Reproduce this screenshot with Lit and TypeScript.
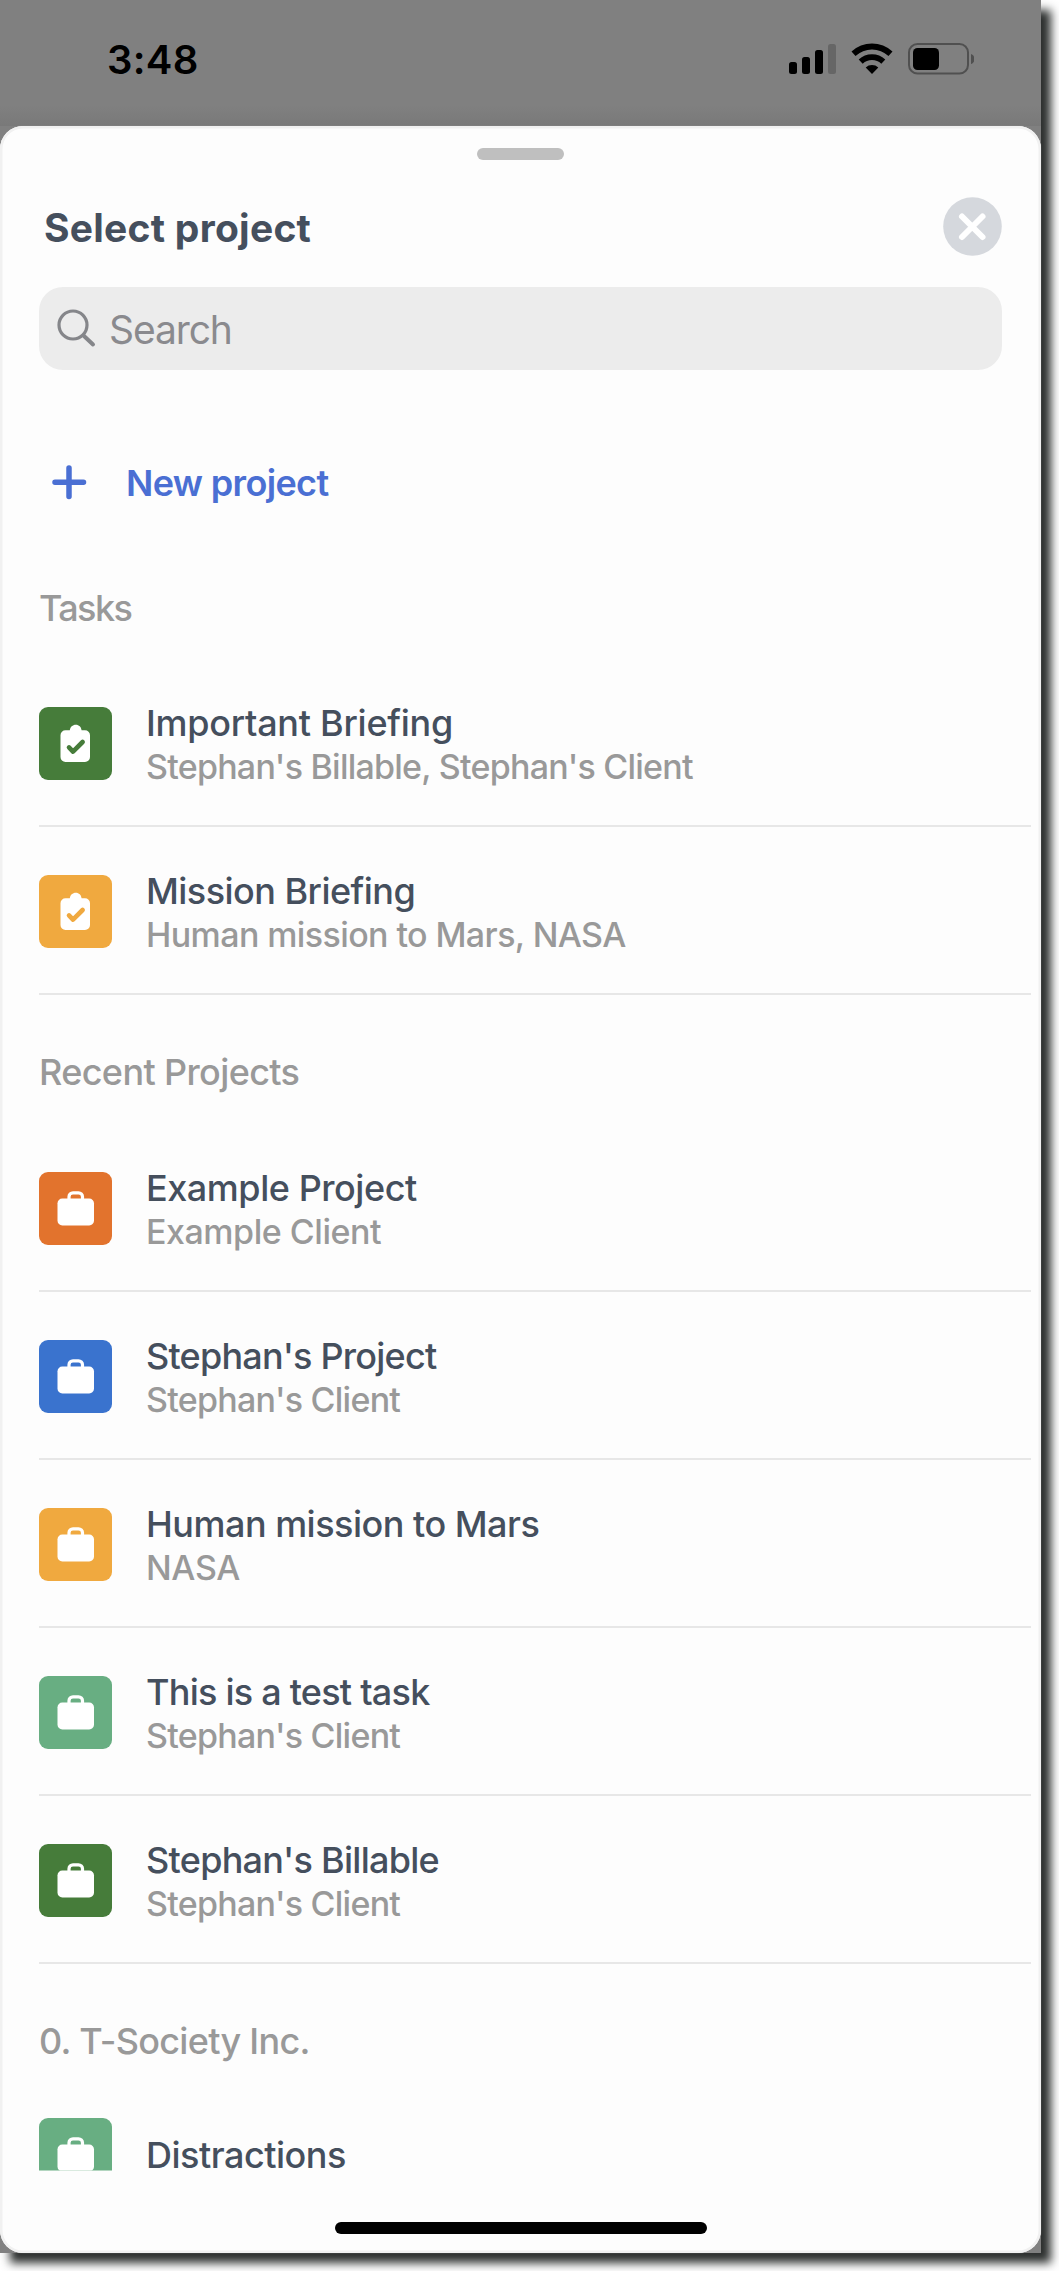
import { LitElement, html, css, svg } from "lit";
import { customElement, property } from "lit/decorators.js";

type Kind = "task" | "project";
/* track / subTrack: letter spacing in px for the title and the subtitle */
interface Entry { kind: Kind; color: string; title: string; track: number; sub?: string; subTrack?: number; }
interface Group { label: string; track: number; rows: Entry[]; }

const groups: Group[] = [
  {
    label: "Tasks", track: -1.6,
    rows: [
      { kind: "task", color: "#467c3a", title: "Important Briefing", track: -0.26, sub: "Stephan's Billable, Stephan's Client", subTrack: -0.76 },
      { kind: "task", color: "#f0a93f", title: "Mission Briefing", track: -0.54, sub: "Human mission to Mars, NASA", subTrack: -0.6 },
    ],
  },
  {
    label: "Recent Projects", track: -0.63,
    rows: [
      { kind: "project", color: "#e2732d", title: "Example Project", track: -0.45, sub: "Example Client", subTrack: -0.46 },
      { kind: "project", color: "#3a73ce", title: "Stephan's Project", track: -0.77, sub: "Stephan's Client", subTrack: -0.75 },
      { kind: "project", color: "#f0a93f", title: "Human mission to Mars", track: -0.5, sub: "NASA", subTrack: -0.36 },
      { kind: "project", color: "#68ae82", title: "This is a test task", track: -0.76, sub: "Stephan's Client", subTrack: -0.75 },
      { kind: "project", color: "#467c3a", title: "Stephan's Billable", track: -0.72, sub: "Stephan's Client", subTrack: -0.75 },
    ],
  },
  { label: "0. T-Society Inc.", track: -0.7, rows: [{ kind: "project", color: "#68ae82", title: "Distractions", track: -0.5 }] },
];

const glyphs = {
  task: svg`<path fill="#fff" d="M26.500 23.300h4.300c.4-3.400 2.800-5.600 6-5.600s5.400 2.200 5.800 5.600H46a5 5 0 0 1 5 5V50a5 5 0 0 1-5 5H26.500a5 5 0 0 1-5-5V28.300a5 5 0 0 1 5-5z"/><path fill="none" stroke="currentColor" stroke-width="4.600" stroke-linecap="round" stroke-linejoin="round" d="M30 40.400l4 4.200L43.600 35"/>`,
  project: svg`<rect x="18.500" y="26.500" width="36.500" height="27" rx="4.800" fill="#fff"/><path fill="none" stroke="#fff" stroke-width="3.200" d="M30 28v-3.200a4 4 0 0 1 4-4h5.500a4 4 0 0 1 4 4V28"/>`,
};

@customElement("entry-row")
export class EntryRow extends LitElement {
  @property({ attribute: false }) entry!: Entry;
  static styles = css`
    :host { display: block; }
    .row { display: flex; gap: 34px; height: 120px; margin-bottom: 48px; box-sizing: border-box; border-bottom: 2px solid #e7e7e7; }
    .row.single { border: 0; margin: 0; height: 73px; }
    .tile { display: block; width: 73px; height: 73px; flex: none; }
    .single .tile { clip-path: inset(0 0 20.500px 0); }
    .text { display: flex; flex-direction: column; white-space: nowrap; }
    .single .text { height: 73px; justify-content: center; }
    .title { font-size: 36px; line-height: 44px; font-weight: 500; color: #454f5d; margin-top: -6px; }
    .single .title { margin-top: 1px; }
    .sub { font-size: 34px; line-height: 44px; font-weight: 500; color: #999; }
  `;
  render() {
    const e = this.entry;
    return html`<div class="row ${e.sub ? "" : "single"}">
      <svg class="tile" viewBox="0 0 73 73" style="color:${e.color}">
        <rect width="73" height="73" rx="9" fill="currentColor"/>${glyphs[e.kind]}
      </svg>
      <div class="text"><span class="title" style="letter-spacing:${e.track}px">${e.title}</span>${e.sub
        ? html`<span class="sub" style="letter-spacing:${e.subTrack}px">${e.sub}</span>` : ""}</div>
    </div>`;
  }
}

@customElement("app-root")
export class AppRoot extends LitElement {
  static styles = css`
    :host { display: block; width: 1059px; height: 2271px; overflow: hidden; background: #fff; font-family: Inter, "Liberation Sans", sans-serif; }
    .phone { width: 1041px; height: 2253px; background: #808080; box-shadow: 10px 10px 9px #2d302f; display: flex; flex-direction: column; }
    .status { height: 126px; flex: none; box-sizing: border-box; padding: 34px 67px 0 107px; display: flex; justify-content: space-between; background: linear-gradient(#808080 105px, #797979); }
    .time { font-size: 40px; line-height: 51px; font-weight: 600; color: #000; letter-spacing: 0.300px; }
    .icons { width: 190px; height: 50px; }
    .sheet { flex: 1; min-height: 0; box-sizing: border-box; background: #fdfdfd; border-radius: 23px; box-shadow: inset 0 0 0 2.500px #f1f1f1, 0 0 1px #aaa; display: flex; flex-direction: column; padding: 22px 10px 19px 39px; }
    .handle { width: 87px; height: 12px; border-radius: 6px; background: #bfbfbf; align-self: center; flex: none; margin-right: 29px; }
    .head { display: flex; justify-content: space-between; align-items: center; height: 59px; margin-top: 37px; padding: 0 29px 0 5px; flex: none; }
    .head h1 { margin: 2px 0 0; font-size: 39px; line-height: 50px; font-weight: 700; color: #454f5d; letter-spacing: 0.260px; }
    .close { width: 59px; height: 59px; }
    .search { flex: none; margin: 31px 29px 0 0; height: 83px; border-radius: 24px; background: #ececec; display: flex; align-items: center; padding-left: 18px; gap: 12px; color: #8a8a8e; font-size: 39px; line-height: 50px; letter-spacing: -1.100px; }
    .search span { margin-top: 2px; }
    .lens { width: 40px; height: 40px; margin-top: -2px; }
    .new { flex: none; display: flex; align-items: center; gap: 39px; height: 50px; margin-top: 87px; padding-left: 12px; color: #4a6fd3; font-size: 36px; line-height: 44px; font-weight: 600; letter-spacing: -0.650px; }
    .new span { margin-top: 2px; }
    .plus { width: 36px; height: 36px; }
    .list { flex: 1; min-height: 0; margin-top: 79px; }
    .label { margin: 0; font-size: 36px; line-height: 44px; font-weight: 500; color: #999; padding-bottom: 77px; }
    .group + .group .label { padding-top: 7px; padding-bottom: 78px; }
    .group:last-child .label { padding-bottom: 55px; }
    .home { flex: none; align-self: center; width: 372px; height: 12px; border-radius: 6px; background: #000; margin: 50px 29px 0 0; }
  `;
  render() {
    return html`<main class="phone">
      <div class="status">
        <span class="time">3:48</span>
        <svg class="icons" viewBox="784 34 190 50">
          <rect x="789" y="62" width="8" height="12" rx="2.500"/><rect x="802" y="57" width="8" height="17" rx="2.500"/>
          <rect x="815" y="50" width="8" height="24" rx="2.500"/><rect x="828" y="44" width="8" height="30" rx="2.500" fill="#666"/>
          <path d="M851.500 51.500a30 30 0 0 1 41 0l-4 4.500a24 24 0 0 0-33 0zM858.700 59.500a19.500 19.500 0 0 1 26.600 0l-4 4.300a13.500 13.500 0 0 0-18.600 0zM865.700 67.500a9.500 9.500 0 0 1 12.600 0L872 74z"/>
          <rect x="909" y="44" width="59" height="29.500" rx="8.500" fill="none" stroke="#505050" stroke-width="2"/>
          <rect x="913" y="48" width="26" height="22" rx="4.500"/><path fill="#505050" d="M971 54c4.700 1.500 4.700 8.500 0 10z"/>
        </svg>
      </div>
      <section class="sheet">
        <div class="handle"></div>
        <div class="head"><h1>Select project</h1>
          <svg class="close" viewBox="0 0 59 59"><circle cx="29.500" cy="29.500" r="29.300" fill="#d5d8dd"/><path stroke="#fff" stroke-width="6" stroke-linecap="round" d="M19 19.500l20.500 20.500M39.500 19.500L19 40"/></svg>
        </div>
        <div class="search">
          <svg class="lens" viewBox="0 0 40 40" fill="none" stroke="#85868a" stroke-linecap="round"><circle cx="16" cy="17" r="14" stroke-width="3.200"/><path stroke-width="4" d="M27 28L36 36.500"/></svg>
          <span>Search</span>
        </div>
        <div class="new">
          <svg class="plus" viewBox="0 0 36 36"><path stroke="currentColor" stroke-width="5.500" stroke-linecap="round" d="M18 4v28.500M4 18.200h28.500"/></svg>
          <span>New project</span>
        </div>
        <div class="list">
          ${groups.map((g) => html`<div class="group"><h2 class="label" style="letter-spacing:${g.track}px">${g.label}</h2>${g.rows.map((r) => html`<entry-row .entry=${r}></entry-row>`)}</div>`)}
        </div>
        <div class="home"></div>
      </section>
    </main>`;
  }
}
